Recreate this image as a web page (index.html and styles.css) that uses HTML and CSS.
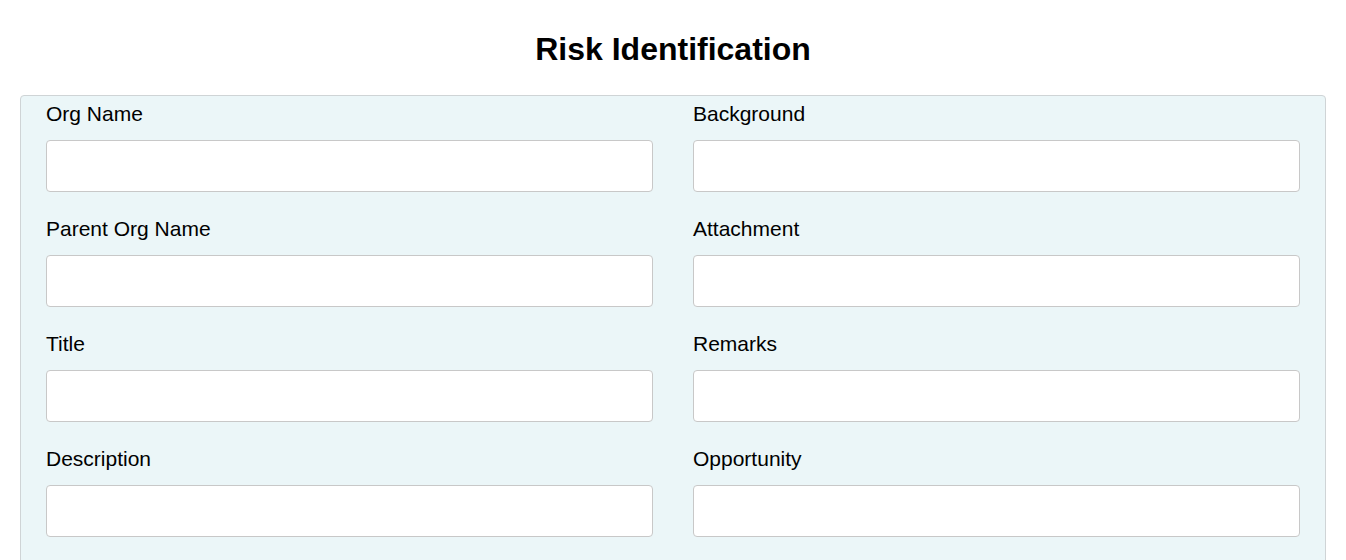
FILE: index.html
```html
<!DOCTYPE html>
<html>
<head>
<meta charset="utf-8">
<link rel="stylesheet" href="styles.css">
</head>
<body>
<h1 class="title">Risk Identification</h1>
<form class="panel">
  <div class="grid">
    <div class="field"><label>Org Name</label><input type="text"></div>
    <div class="field"><label>Background</label><input type="text"></div>
    <div class="field"><label>Parent Org Name</label><input type="text"></div>
    <div class="field"><label>Attachment</label><input type="text"></div>
    <div class="field"><label>Title</label><input type="text"></div>
    <div class="field"><label>Remarks</label><input type="text"></div>
    <div class="field"><label>Description</label><input type="text"></div>
    <div class="field"><label>Opportunity</label><input type="text"></div>
  </div>
</form>
</body>
</html>
```
FILE: styles.css
```css
html, body {
  margin: 0;
  padding: 0;
  background: #ffffff;
  font-family: "Liberation Sans", Arial, sans-serif;
  color: #000;
}
html {
  height: 560px;
  overflow: hidden;
}
body {
  padding: 0 20px;
}
.title {
  margin: 0;
  padding-top: 30px;
  height: 95px;
  box-sizing: border-box;
  font-size: 32px;
  line-height: 38px;
  font-weight: bold;
  text-align: center;
}
.panel {
  background: #ebf6f8;
  border: 1px solid #cfd4d6;
  border-radius: 4px;
  padding: 6px 25px 0;
  height: 500px;
}
.grid {
  display: grid;
  grid-template-columns: 1fr 1fr;
  column-gap: 40px;
}
.field {
  display: flex;
  flex-direction: column;
  margin-bottom: 25px;
}
.field label {
  font-size: 21px;
  line-height: 24px;
  height: 24px;
  margin-bottom: 14px;
}
.field input {
  height: 52px;
  box-sizing: border-box;
  border: 1px solid #c8c8c8;
  border-radius: 4px;
  background: #fff;
  margin: 0;
  padding: 6px 12px;
  font-size: 16px;
  font-family: inherit;
}
```
